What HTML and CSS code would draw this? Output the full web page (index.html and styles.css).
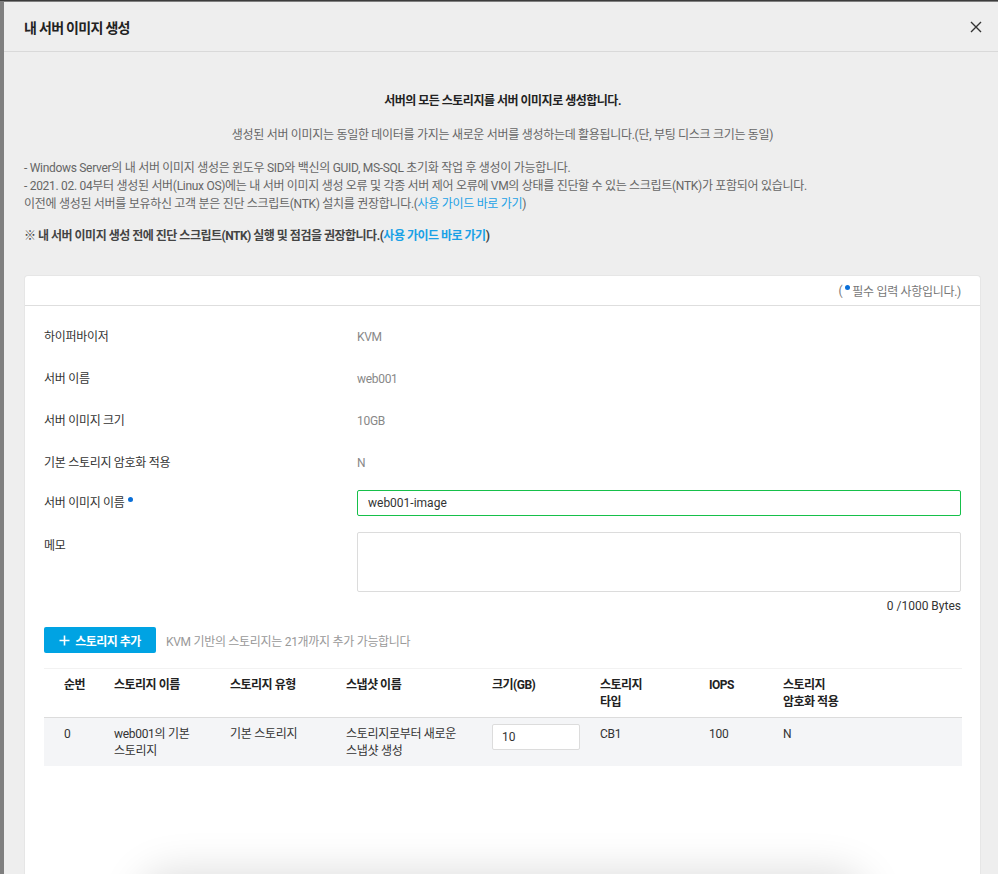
FILE: index.html
```html
<!DOCTYPE html>
<html lang="ko">
<head>
<meta charset="utf-8">
<title>내 서버 이미지 생성</title>
<link rel="stylesheet" href="styles.css">
</head>
<body>
<div class="page">
  <div class="modal">
    <div class="modal-header">
      <h1 class="modal-title">내 서버 이미지 생성</h1>
      <button class="close-btn" aria-label="닫기">
        <svg width="12" height="12" viewBox="0 0 12 12"><path d="M1 1 L11 11 M11 1 L1 11" stroke="#333" stroke-width="1.4" fill="none"/></svg>
      </button>
    </div>
    <div class="modal-body">
      <p class="intro-strong">서버의 모든 스토리지를 서버 이미지로 생성합니다.</p>
      <p class="intro-sub">생성된 서버 이미지는 동일한 데이터를 가지는 새로운 서버를 생성하는데 활용됩니다.(단, 부팅 디스크 크기는 동일)</p>
      <div class="notes">
        <p>- Windows Server의 내 서버 이미지 생성은 윈도우 SID와 백신의 GUID, MS-SQL 초기화 작업 후 생성이 가능합니다.</p>
        <p>- 2021. 02. 04부터 생성된 서버(Linux OS)에는 내 서버 이미지 생성 오류 및 각종 서버 제어 오류에 VM의 상태를 진단할 수 있는 스크립트(NTK)가 포함되어 있습니다.</p>
        <p>이전에 생성된 서버를 보유하신 고객 분은 진단 스크립트(NTK) 설치를 권장합니다.(<a class="link" href="#">사용 가이드 바로 가기</a>)</p>
      </div>
      <p class="notice">※ 내 서버 이미지 생성 전에 진단 스크립트(NTK) 실행 및 점검을 권장합니다.(<a class="link" href="#">사용 가이드 바로 가기</a>)</p>

      <div class="card">
        <div class="card-header">(<span class="req-dot"></span>필수 입력 사항입니다.)</div>
        <div class="card-body">
          <div class="form-row"><div class="label">하이퍼바이저</div><div class="value">KVM</div></div>
          <div class="form-row"><div class="label">서버 이름</div><div class="value">web001</div></div>
          <div class="form-row"><div class="label">서버 이미지 크기</div><div class="value">10GB</div></div>
          <div class="form-row"><div class="label">기본 스토리지 암호화 적용</div><div class="value">N</div></div>
          <div class="form-row input-row">
            <div class="label">서버 이미지 이름<span class="req-dot sup"></span></div>
            <div class="field"><input class="text-input" type="text" value="web001-image"></div>
          </div>
          <div class="form-row memo-row">
            <div class="label">메모</div>
            <div class="field">
              <textarea class="memo"></textarea>
              <div class="bytes">0 /1000 Bytes</div>
            </div>
          </div>

          <div class="storage-bar">
            <button class="add-btn"><svg class="plus" width="11" height="11" viewBox="0 0 11 11"><path d="M5.5 0.5 V10.5 M0.5 5.5 H10.5" stroke="#fff" stroke-width="1.6" fill="none"/></svg>스토리지 추가</button>
            <span class="hint">KVM 기반의 스토리지는 21개까지 추가 가능합니다</span>
          </div>

          <table class="storage-table">
            <colgroup>
              <col class="c1"><col class="c2"><col class="c3"><col class="c4"><col class="c5"><col class="c6"><col class="c7"><col class="c8">
            </colgroup>
            <thead>
              <tr>
                <th>순번</th>
                <th>스토리지 이름</th>
                <th>스토리지 유형</th>
                <th>스냅샷 이름</th>
                <th>크기(GB)</th>
                <th>스토리지<br>타입</th>
                <th>IOPS</th>
                <th>스토리지<br>암호화 적용</th>
              </tr>
            </thead>
            <tbody>
              <tr>
                <td>0</td>
                <td>web001의 기본<br>스토리지</td>
                <td>기본 스토리지</td>
                <td>스토리지로부터 새로운<br>스냅샷 생성</td>
                <td><input class="size-input" type="text" value="10"></td>
                <td>CB1</td>
                <td>100</td>
                <td>N</td>
              </tr>
            </tbody>
          </table>
          <div class="floating-footer"></div>
        </div>
      </div>
    </div>
  </div>
</div>
</body>
</html>
```
FILE: styles.css
```css
* { box-sizing: border-box; }
html, body { margin: 0; padding: 0; height: 100%; overflow: hidden; }
body {
  background: #7f7f7f;
  font-family: "Roboto", "Noto Sans CJK KR", sans-serif;
  font-size: 12px;
  letter-spacing: -0.3px;
  color: #333;
}
.page {
  border-top: 1px solid #3c3c3c;
  padding: 1px 0 0 4px;
}
.modal {
  width: 997px;
  background: #eeeeee;
  min-height: 900px;
}
.modal-header {
  height: 50px;
  display: flex;
  align-items: center;
  justify-content: space-between;
  padding: 0 19px 0 20px;
  border-bottom: 1px solid #d9d9d9;
}
.modal-title {
  margin: 0;
  font-size: 14px;
  font-weight: 700;
  letter-spacing: -0.7px;
  color: #222;
}
.close-btn {
  border: 0;
  background: none;
  padding: 0;
  width: 12px;
  height: 12px;
  display: flex;
}
.modal-body {
  padding: 0 20px;
}
.intro-strong {
  margin: 40px 0 0;
  text-align: center;
  font-weight: 700;
  letter-spacing: -0.5px;
  color: #222;
  line-height: 18px;
}
.intro-sub {
  margin: 16px 0 0;
  text-align: center;
  color: #666;
  line-height: 18px;
}
.notes {
  margin-top: 15px;
  color: #666;
}
.notes p {
  margin: 0;
  line-height: 18px;
}
.notice {
  margin: 14px 0 0;
  font-weight: 700;
  letter-spacing: -0.5px;
  color: #444;
  line-height: 18px;
}
.link {
  color: #1aa1e6;
  text-decoration: none;
}
.card {
  margin-top: 30px;
  background: #fff;
  border: 1px solid #e6e6e6;
  border-bottom: 0;
  border-radius: 4px 4px 0 0;
}
.card-header {
  height: 30px;
  display: flex;
  align-items: center;
  justify-content: flex-end;
  padding: 0 19px;
  border-bottom: 1px solid #dedede;
  color: #777;
}
.req-dot {
  display: inline-block;
  width: 5px;
  height: 5px;
  border-radius: 50%;
  background: #0a6fd8;
  margin: 0 2px 6px 3px;
}
.req-dot.sup {
  margin: 0 0 8px 3px;
  vertical-align: middle;
}
.card-body {
  padding: 10px 19px 0 19px;
}
.form-row {
  display: flex;
  align-items: center;
  height: 42px;
}
.label {
  width: 313px;
  flex: none;
  color: #333;
  line-height: 18px;
}
.value {
  color: #888;
}
.field { flex: 1; }
.input-row {
  height: auto;
  padding: 6px 0 0;
}
.text-input {
  display: block;
  width: 100%;
  height: 26px;
  border: 1px solid #16c04a;
  border-radius: 2px;
  padding: 0 10px;
  font: inherit;
  font-size: 12px;
  letter-spacing: 0;
  color: #333;
  outline: none;
}
.memo-row {
  height: auto;
  align-items: flex-start;
  padding-top: 16px;
}
.memo-row .label { padding-top: 5px; }
.memo {
  display: block;
  width: 100%;
  height: 60px;
  border: 1px solid #dcdcdc;
  border-radius: 2px;
  resize: none;
  font: inherit;
}
.bytes {
  text-align: right;
  color: #333;
  letter-spacing: 0;
  line-height: 18px;
  margin-top: 5px;
}
.storage-bar {
  display: flex;
  align-items: center;
  margin-top: 12px;
  gap: 10px;
}
.add-btn {
  height: 26px;
  width: 112px;
  border: 0;
  border-radius: 2px;
  background: #00a3e3;
  color: #fff;
  font: inherit;
  font-size: 12px;
  font-weight: 700;
  letter-spacing: -0.5px;
  display: flex;
  align-items: center;
  justify-content: center;
  padding: 0;
}
.plus {
  margin-right: 5px;
  flex: none;
}
.hint { color: #999; }
.storage-table {
  margin-top: 15px;
  width: 918px;
  border-collapse: collapse;
  table-layout: fixed;
}
.c1 { width: 70px; }
.c2 { width: 116px; }
.c3 { width: 116px; }
.c4 { width: 146px; }
.c5 { width: 108px; }
.c6 { width: 109px; }
.c7 { width: 74px; }
.c8 { width: 179px; }
.storage-table th,
.storage-table td {
  text-align: left;
  vertical-align: top;
  line-height: 17px;
}
.storage-table th:first-child,
.storage-table td:first-child { padding-left: 20px; }
.storage-table thead tr {
  border-top: 1px solid #f2f2f2;
  border-bottom: 1px solid #dcdcdc;
}
.storage-table th {
  font-weight: 700;
  letter-spacing: -0.5px;
  color: #222;
  padding: 8px 0 0;
  height: 49px;
}
.storage-table tbody tr { background: #f4f5f7; }
.storage-table td {
  color: #333;
  padding: 8px 0 0;
  height: 48px;
}
.size-input {
  display: block;
  width: 88px;
  height: 26px;
  margin-top: -2px;
  border: 1px solid #dcdcdc;
  border-radius: 2px;
  background: #fff;
  padding: 0 9px;
  font: inherit;
  font-size: 12px;
  color: #333;
}
.floating-footer {
  margin: 116px auto 0;
  width: 720px;
  height: 60px;
  background: #fff;
  box-shadow: 0 -6px 40px 6px rgba(0,0,0,0.13);
  border-radius: 30px;
}
```
